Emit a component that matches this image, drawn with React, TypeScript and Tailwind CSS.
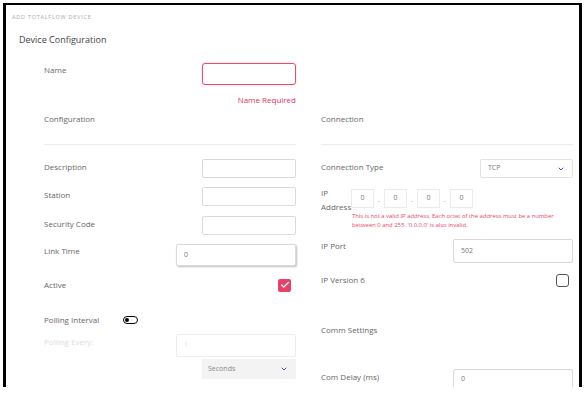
import React from 'react';
import { ChevronDown, Check } from 'lucide-react';

const font = { fontFamily: '"Open Sans", "Noto Sans", Arial, sans-serif' };

const Label: React.FC<{ children: React.ReactNode; faint?: boolean }> = ({ children, faint }) => (
  <div className={`block text-[8px] leading-[12px] ${faint ? 'text-[#dcdcdc]' : 'text-[#666]'}`}>{children}</div>
);

const TextBox: React.FC<{ value?: string; w: string; h: string; shadow?: boolean; faint?: boolean }> = ({ value, w, h, shadow, faint }) => (
  <div
    className={`${w} ${h} flex items-center px-[7px] rounded-[2px] border bg-white text-[7px] ${
      faint ? 'border-[#eeeeee] text-[#e0e0e0]' : 'border-[#d9d9d9] text-[#777]'
    } ${shadow ? 'shadow-[1px_1px_2px_rgba(0,0,0,0.25)]' : ''}`}
  >
    {value}
  </div>
);

const App: React.FC = () => {
  return (
    <div className="w-[585px] h-[399px] bg-white overflow-hidden" style={font}>
      <div className="ml-[3px] mt-[3px] w-[579px] h-[384px] border-l-[3px] border-t-[2px] border-r-[3px] border-black overflow-hidden">
        <div className="pl-[6px] pt-[8px] text-[5.5px] leading-[8px] tracking-[0.75px] text-[#aaa] uppercase">Add Totalflow Device</div>
        <div className="pl-[13px] mt-[12px] text-[9px] leading-[14px] text-[#444]">Device Configuration</div>

        <div className="pl-[38px] pr-[5px]">
          {/* Name */}
          <div className="w-[252px] mt-[16px] h-[22px] flex items-start justify-between">
            <div className="pt-[1px]"><Label>Name</Label></div>
            <div className="w-[94px] h-[22px] rounded-[3px] border border-[#e2506d] shadow-[0_0_2px_rgba(226,80,109,0.35)] bg-white" />
          </div>
          <div className="w-[252px] mt-[9px] text-right text-[8px] leading-[12px] text-[#e0355a]">Name Required</div>

          <div className="flex gap-[25px] mt-[4px]">
            {/* left column */}
            <div className="w-[252px] flex flex-col">
              <div className="h-[35px] border-b border-[#ececec] pt-[3px]"><Label>Configuration</Label></div>
              <div className="mt-[14px] h-[19px] flex items-center justify-between">
                <div className="-mt-[3px]"><Label>Description</Label></div>
                <TextBox w="w-[94px]" h="h-[19px]" />
              </div>
              <div className="mt-[9px] h-[19px] flex items-center justify-between">
                <div className="-mt-[3px]"><Label>Station</Label></div>
                <TextBox w="w-[94px]" h="h-[19px]" />
              </div>
              <div className="mt-[10px] h-[19px] flex items-center justify-between">
                <div className="-mt-[3px]"><Label>Security Code</Label></div>
                <TextBox w="w-[94px]" h="h-[19px]" />
              </div>
              <div className="mt-[9px] h-[22px] flex items-center justify-between">
                <div className="-mt-[8px]"><Label>Link Time</Label></div>
                <TextBox w="w-[120px]" h="h-[22px]" value="0" shadow />
              </div>
              <div className="mt-[12px] h-[14px] flex items-center justify-between">
                <Label>Active</Label>
                <div className="mr-[5px] w-[13px] h-[13px] rounded-[2px] bg-[#e6426a] flex items-center justify-center">
                  <Check size={10} strokeWidth={3} className="text-white" />
                </div>
              </div>
              <div className="mt-[21px] h-[14px] flex items-center gap-[24px]">
                <Label>Polling Interval</Label>
                <div className="w-[15px] h-[8px] rounded-full border-[1.5px] border-black flex items-center px-[1px]">
                  <div className="w-[4px] h-[4px] rounded-full bg-black" />
                </div>
              </div>
              <div className="mt-[7px] h-[23px] flex items-start justify-between">
                <div className="pt-[2px]"><Label faint>Polling Every:</Label></div>
                <TextBox w="w-[120px]" h="h-[23px]" value="1" faint />
              </div>
              <div className="mt-[2px] h-[20px] flex justify-end">
                <div className="w-[94px] h-[20px] bg-[#f3f3f3] flex items-center justify-between pl-[6px] pr-[8px]">
                  <span className="text-[7px] text-[#888]">Seconds</span>
                  <ChevronDown size={8} strokeWidth={3} className="text-[#3f51b5]" />
                </div>
              </div>
            </div>

            {/* right column */}
            <div className="w-[252px] flex flex-col">
              <div className="h-[35px] border-b border-[#ececec] pt-[3px]"><Label>Connection</Label></div>
              <div className="mt-[14px] h-[19px] flex items-center justify-between">
                <div className="-mt-[3px]"><Label>Connection Type</Label></div>
                <div className="w-[93px] h-[19px] border border-[#e3e3e3] rounded-[2px] flex items-center justify-between pl-[7px] pr-[7px]">
                  <span className="text-[7px] text-[#777]">TCP</span>
                  <ChevronDown size={8} strokeWidth={3} className="text-[#3f51b5]" />
                </div>
              </div>
              <div className="mt-[9px] h-[19px] flex items-start">
                <div className="w-[30px] text-[8px] leading-[14px] text-[#666] -mt-[1px]">IP Address</div>
                <div className="flex items-center">
                  {['0', '0', '0', '0'].map((o, i) => (
                    <React.Fragment key={i}>
                      {i > 0 && <span className="w-[10px] text-center text-[7px] leading-[19px] text-[#888] pt-[3px]">.</span>}
                      <div className="w-[23px] h-[19px] border border-[#ebebeb] flex items-center justify-center text-[7px] text-[#777]">{o}</div>
                    </React.Fragment>
                  ))}
                </div>
              </div>
              <div className="mt-[6px] ml-[31px] w-[216px] text-[5.9px] leading-[9px] text-[#e8456a]">
                This is not a valid IP address. Each octet of the address must be a number between 0 and 255. '0.0.0.0' is also invalid.
              </div>
              <div className="mt-[9px] h-[24px] flex items-start justify-between">
                <div className="pt-[1px]"><Label>IP Port</Label></div>
                <TextBox w="w-[120px]" h="h-[24px]" value="502" />
              </div>
              <div className="mt-[10px] h-[14px] flex items-center justify-between">
                <Label>IP Version 6</Label>
                <div className="mr-[4px] w-[13px] h-[13px] rounded-[3px] border border-[#555] bg-white" />
              </div>
              <div className="mt-[36px] h-[14px] flex items-center">
                <Label>Comm Settings</Label>
              </div>
              <div className="mt-[32px] h-[21px] flex items-center justify-between">
                <div className="-mt-[6px]"><Label>Com Delay (ms)</Label></div>
                <TextBox w="w-[120px]" h="h-[21px]" value="0" />
              </div>
            </div>
          </div>
        </div>
      </div>
    </div>
  );
};

export default App;
